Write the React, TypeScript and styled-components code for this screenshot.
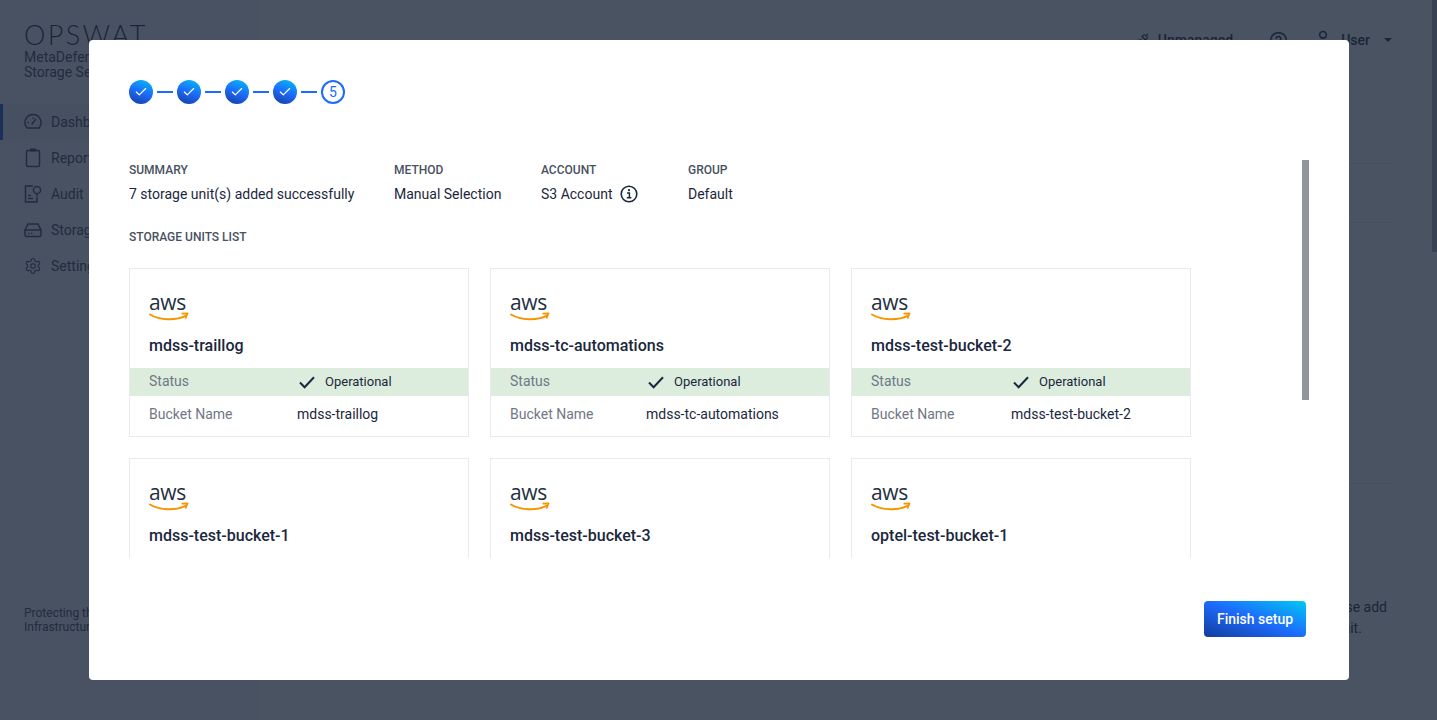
import React, { ReactElement, ReactNode } from "react";
import styled, { createGlobalStyle } from "styled-components";
import { Check, CircleHelp, Settings, Unplug, User } from "lucide-react";

const GlobalStyle = createGlobalStyle`
  html, body {
    margin: 0;
    height: 100%;
    overflow: hidden;
    font-family: Roboto, "Liberation Sans", sans-serif;
    color: #1b273d;
  }
  * {
    box-sizing: border-box;
  }
`;

const PageStyled = styled.div`
  display: flex;
  height: 720px;
  background: #fff;
`;

const SidebarStyled = styled.aside`
  display: flex;
  flex-direction: column;
  width: 258px;
  flex-shrink: 0;
  background: #fbfbfc;
  padding-bottom: 86px;
`;

const BrandStyled = styled.div`
  padding: 20px 24px 0;
  height: 104px;
`;

const LogoStyled = styled.div`
  font-family: Lato, sans-serif;
  font-weight: 300;
  font-size: 27px;
  line-height: 30px;
  letter-spacing: 2.4px;
  color: #1b273d;
`;

const ProductStyled = styled.div`
  font-size: 14px;
  line-height: 15px;
  color: #3c475a;
`;

const NavItemStyled = styled.div<{ $active?: boolean }>`
  display: flex;
  align-items: center;
  gap: 9px;
  height: 36px;
  padding-left: ${(p) => (p.$active ? "21px" : "24px")};
  font-size: 14px;
  color: #3c475a;
  background: ${(p) => (p.$active ? "#eef2f9" : "transparent")};
  border-left: ${(p) => (p.$active ? "3px solid #1d5bd8" : "none")};
`;

const SidebarFooterStyled = styled.div`
  margin-top: auto;
  padding: 0 24px;
  font-size: 12px;
  line-height: 14px;
  color: #3c475a;
`;

const MainStyled = styled.main`
  flex: 1;
  display: flex;
  flex-direction: column;
  padding-right: 45px;
`;

const HeaderStyled = styled.header`
  display: flex;
  align-items: center;
  justify-content: flex-end;
  height: 80px;
  font-size: 14px;
  font-weight: 500;
`;

const HeaderItemStyled = styled.div<{ $gap: number; $left: number }>`
  display: flex;
  align-items: center;
  gap: ${(p) => p.$gap}px;
  margin-left: ${(p) => p.$left}px;
`;

const UserIconStyled = styled(User)`
  margin-top: -3px;
`;

const CaretStyled = styled.span`
  width: 0;
  height: 0;
  border-left: 4px solid transparent;
  border-right: 4px solid transparent;
  border-top: 4px solid #1b273d;
  margin-left: 6px;
`;

const PanelRowStyled = styled.div<{ $height: number }>`
  height: ${(p) => p.$height}px;
  border-bottom: 1px solid #e6e8ec;
`;

const HintStyled = styled.div`
  display: flex;
  justify-content: flex-end;
  padding: 113px 5px 0 0;
  font-size: 14px;
  line-height: 21px;
`;

const OverlayStyled = styled.div`
  position: fixed;
  inset: 0;
  display: flex;
  align-items: center;
  justify-content: center;
  padding-left: 1px;
  background: rgba(26, 37, 56, 0.79);
`;

const PageThumbStyled = styled.div`
  position: fixed;
  top: 0;
  right: 0;
  width: 5px;
  height: 252px;
  background: #374152;
`;

const ModalStyled = styled.div`
  display: flex;
  flex-direction: column;
  width: 1260px;
  height: 640px;
  padding: 40px 43px 43px 40px;
  background: #fff;
  border-radius: 4px;
`;

const StepperStyled = styled.div`
  display: flex;
  align-items: center;
  gap: 4px;
  height: 24px;
`;

const StepDoneStyled = styled.div`
  display: flex;
  align-items: center;
  justify-content: center;
  width: 24px;
  height: 24px;
  border-radius: 50%;
  background: linear-gradient(200deg, #00c2f3 0%, #1d6bfc 50%, #123d9c 100%);
  color: #fff;
`;

const StepCurrentStyled = styled.div`
  display: flex;
  align-items: center;
  justify-content: center;
  width: 24px;
  height: 24px;
  border-radius: 50%;
  border: 2px solid #1d6bfc;
  color: #1d6bfc;
  font-size: 14px;
`;

const ConnectorStyled = styled.div`
  width: 16px;
  height: 2px;
  background: #1d6bfc;
`;

const ScrollFrameStyled = styled.div`
  position: relative;
  flex: 1;
  min-height: 0;
  margin-top: 56px;
  margin-right: -3px;
`;

const ScrollAreaStyled = styled.div`
  height: 100%;
  overflow: hidden;
`;

const ScrollThumbStyled = styled.div`
  position: absolute;
  top: 0;
  right: 0;
  width: 7px;
  height: 240px;
  background: #92959e;
`;

const SummaryStyled = styled.div`
  display: flex;
  padding-top: 3px;
`;

const SummaryItemStyled = styled.div<{ $width: number }>`
  width: ${(p) => p.$width}px;
`;

const LabelStyled = styled.div`
  font-size: 12px;
  font-weight: 500;
  line-height: 14px;
  color: #485161;
  text-transform: uppercase;
`;

const ValueStyled = styled.div`
  display: flex;
  align-items: center;
  gap: 8px;
  margin-top: 7px;
  font-size: 14px;
  line-height: 20px;
`;

const ListLabelStyled = styled(LabelStyled)`
  margin-top: 26px;
`;

const CardGridStyled = styled.div`
  display: grid;
  grid-template-columns: repeat(3, 340px);
  gap: 21px;
  margin-top: 24px;
  padding-bottom: 10px;
`;

const CardStyled = styled.div`
  height: 169px;
  padding-top: 24px;
  border: 1px solid #e8eaee;
`;

const AwsLogoStyled = styled.div`
  height: 31px;
  margin-left: 19px;
  width: 40px;
`;

const AwsTextStyled = styled.span`
  display: block;
  font-family: "Open Sans", sans-serif;
  font-size: 21px;
  line-height: 18px;
  letter-spacing: -0.3px;
  color: #232f3e;
`;

const AwsSmileStyled = styled.svg`
  display: block;
  margin-top: 1px;
`;

const CardTitleStyled = styled.div`
  margin: 12px 19px 12px;
  font-size: 16px;
  font-weight: 500;
  line-height: 20px;
`;

const CardRowStyled = styled.div<{ $valueAt: number; $status?: boolean }>`
  display: grid;
  grid-template-columns: ${(p) => p.$valueAt}px 1fr;
  align-items: center;
  height: ${(p) => (p.$status ? 28 : 36)}px;
  padding-left: 19px;
  padding-bottom: ${(p) => (p.$status ? 2 : 0)}px;
  font-size: 14px;
  background: ${(p) => (p.$status ? "#dcedde" : "transparent")};
`;

const RowLabelStyled = styled.span`
  color: #6f7785;
`;

const OperationalStyled = styled.span`
  display: flex;
  align-items: center;
  gap: 10px;
  padding-left: 2px;
  font-size: 13px;
`;

const OperationalCheckStyled = styled.svg`
  margin-top: 2px;
`;

const FooterStyled = styled.div`
  display: flex;
  justify-content: flex-end;
  padding-top: 43px;
`;

const FinishButtonStyled = styled.button`
  width: 102px;
  height: 36px;
  border: none;
  border-radius: 4px;
  background: linear-gradient(
    200deg,
    #00c8f5 0%,
    #1d6bfc 50%,
    #123d9c 100%
  );
  color: #fff;
  font-family: Roboto, sans-serif;
  font-size: 14px;
  font-weight: 500;
`;

const units = [
  { name: "mdss-traillog", valueAt: 148 },
  { name: "mdss-tc-automations", valueAt: 136 },
  { name: "mdss-test-bucket-2", valueAt: 140 },
  { name: "mdss-test-bucket-1", valueAt: 140 },
  { name: "mdss-test-bucket-3", valueAt: 140 },
  { name: "optel-test-bucket-1", valueAt: 140 },
  { name: "optel-test-bucket-2", valueAt: 140 },
];

const GaugeIcon = (): ReactElement => (
  <svg width="18" height="20" viewBox="0 0 18 20" fill="none" stroke="currentColor" strokeWidth="1.5">
    <path d="M3 16h12l1-1.6A8 8 0 1 0 2 14.4z" />
    <path d="M7.6 12.5L12 7M3.4 10.5H5M9 5.6v1.4" />
  </svg>
);

const ClipboardIcon = (): ReactElement => (
  <svg width="18" height="20" viewBox="0 0 18 20" fill="none" stroke="currentColor" strokeWidth="1.5">
    <rect x="2.5" y="2.5" width="13" height="16" rx="1.5" />
    <path d="M6 2h6" strokeWidth="3" />
  </svg>
);

const AuditIcon = (): ReactElement => (
  <svg width="18" height="20" viewBox="0 0 18 20" fill="none" stroke="currentColor" strokeWidth="1.5">
    <path d="M9 2H1.5v16H13v-5" />
    <path d="M4 11.5h3M4 14.5h5" />
    <circle cx="13" cy="6" r="3.6" />
    <path d="M13 9.6v3" />
  </svg>
);

const StorageIcon = (): ReactElement => (
  <svg width="18" height="20" viewBox="0 0 18 20" fill="none" stroke="currentColor" strokeWidth="1.5">
    <path d="M4 4h10l3 6v5a1.5 1.5 0 0 1-1.5 1.5h-13A1.5 1.5 0 0 1 1 15v-5z" />
    <path d="M1 10h16M4 13.4h1.4M7 13.4h1.4" />
  </svg>
);

const navItems = [
  { label: "Dashboard", icon: <GaugeIcon />, active: true },
  { label: "Reports", icon: <ClipboardIcon /> },
  { label: "Audit", icon: <AuditIcon /> },
  { label: "Storage Units", icon: <StorageIcon /> },
  { label: "Settings", icon: <Settings size={18} strokeWidth={1.5} /> },
];

const InfoIcon = (): ReactElement => (
  <svg width="18" height="18" viewBox="0 0 18 18" fill="none">
    <circle cx="9" cy="9" r="7.8" stroke="#1b273d" strokeWidth="1.6" />
    <circle cx="9" cy="5.2" r="1.1" fill="#1b273d" />
    <path d="M7 8h2.4v4.6M6.8 12.8h4.6" stroke="#1b273d" strokeWidth="1.5" />
  </svg>
);

const AwsLogo = (): ReactElement => (
  <AwsLogoStyled>
    <AwsTextStyled>aws</AwsTextStyled>
    <AwsSmileStyled width="40" height="10" viewBox="0 0 40 10" fill="none">
      <path
        d="M1 2.5C11 8.5 27 8.8 37 3.6"
        stroke="#f79400"
        strokeWidth="2"
        strokeLinecap="round"
      />
      <path
        d="M32.5 1.6L38.6 1.4L36.4 6.6"
        stroke="#f79400"
        strokeWidth="1.6"
        strokeLinejoin="round"
      />
    </AwsSmileStyled>
  </AwsLogoStyled>
);

const SummaryItem = ({
  label,
  width,
  children,
}: {
  label: string;
  width: number;
  children: ReactNode;
}): ReactElement => (
  <SummaryItemStyled $width={width}>
    <LabelStyled>{label}</LabelStyled>
    <ValueStyled>{children}</ValueStyled>
  </SummaryItemStyled>
);

const UnitCard = ({
  name,
  valueAt,
}: {
  name: string;
  valueAt: number;
}): ReactElement => (
  <CardStyled>
    <AwsLogo />
    <CardTitleStyled>{name}</CardTitleStyled>
    <CardRowStyled $status $valueAt={valueAt}>
      <RowLabelStyled>Status</RowLabelStyled>
      <OperationalStyled>
        <OperationalCheckStyled width="16" height="13" viewBox="0 0 16 13" fill="none">
          <path d="M1 6.5L5.6 11.2L15 1.2" stroke="#1b273d" strokeWidth="2" />
        </OperationalCheckStyled>
        Operational
      </OperationalStyled>
    </CardRowStyled>
    <CardRowStyled $valueAt={valueAt}>
      <RowLabelStyled>Bucket Name</RowLabelStyled>
      <span>{name}</span>
    </CardRowStyled>
  </CardStyled>
);

const App = (): ReactElement => (
  <>
    <GlobalStyle />
    <PageStyled>
      <SidebarStyled>
        <BrandStyled>
          <LogoStyled>OPSWAT</LogoStyled>
          <ProductStyled>
            MetaDefender
            <br />
            Storage Security
          </ProductStyled>
        </BrandStyled>
        {navItems.map((item) => (
          <NavItemStyled key={item.label} $active={item.active}>
            {item.icon}
            {item.label}
          </NavItemStyled>
        ))}
        <SidebarFooterStyled>
          Protecting the World&apos;s Critical
          <br />
          Infrastructure
        </SidebarFooterStyled>
      </SidebarStyled>
      <MainStyled>
        <HeaderStyled>
          <HeaderItemStyled $gap={9} $left={0}>
            <Unplug size={14} />
            Unmanaged
          </HeaderItemStyled>
          <HeaderItemStyled $gap={0} $left={36}>
            <CircleHelp size={19} />
          </HeaderItemStyled>
          <HeaderItemStyled $gap={8} $left={25}>
            <UserIconStyled size={20} />
            User
            <CaretStyled />
          </HeaderItemStyled>
        </HeaderStyled>
        <PanelRowStyled $height={84} />
        <PanelRowStyled $height={59} />
        <PanelRowStyled $height={261} />
        <HintStyled>
          <div>
            To get started, please add
            <br />
            your first storage unit.
          </div>
        </HintStyled>
      </MainStyled>
    </PageStyled>
    <OverlayStyled>
      <ModalStyled>
        <StepperStyled>
          {[1, 2, 3, 4].map((step) => (
            <React.Fragment key={step}>
              <StepDoneStyled>
                <Check size={14} strokeWidth={2} />
              </StepDoneStyled>
              <ConnectorStyled />
            </React.Fragment>
          ))}
          <StepCurrentStyled>5</StepCurrentStyled>
        </StepperStyled>
        <ScrollFrameStyled>
          <ScrollAreaStyled>
            <SummaryStyled>
              <SummaryItem label="Summary" width={265}>
                7 storage unit(s) added successfully
              </SummaryItem>
              <SummaryItem label="Method" width={147}>
                Manual Selection
              </SummaryItem>
              <SummaryItem label="Account" width={147}>
                S3 Account
                <InfoIcon />
              </SummaryItem>
              <SummaryItem label="Group" width={100}>
                Default
              </SummaryItem>
            </SummaryStyled>
            <ListLabelStyled>Storage units list</ListLabelStyled>
            <CardGridStyled>
              {units.map((unit) => (
                <UnitCard key={unit.name} name={unit.name} valueAt={unit.valueAt} />
              ))}
            </CardGridStyled>
          </ScrollAreaStyled>
          <ScrollThumbStyled />
        </ScrollFrameStyled>
        <FooterStyled>
          <FinishButtonStyled>Finish setup</FinishButtonStyled>
        </FooterStyled>
      </ModalStyled>
    </OverlayStyled>
    <PageThumbStyled />
  </>
);

export default App;
